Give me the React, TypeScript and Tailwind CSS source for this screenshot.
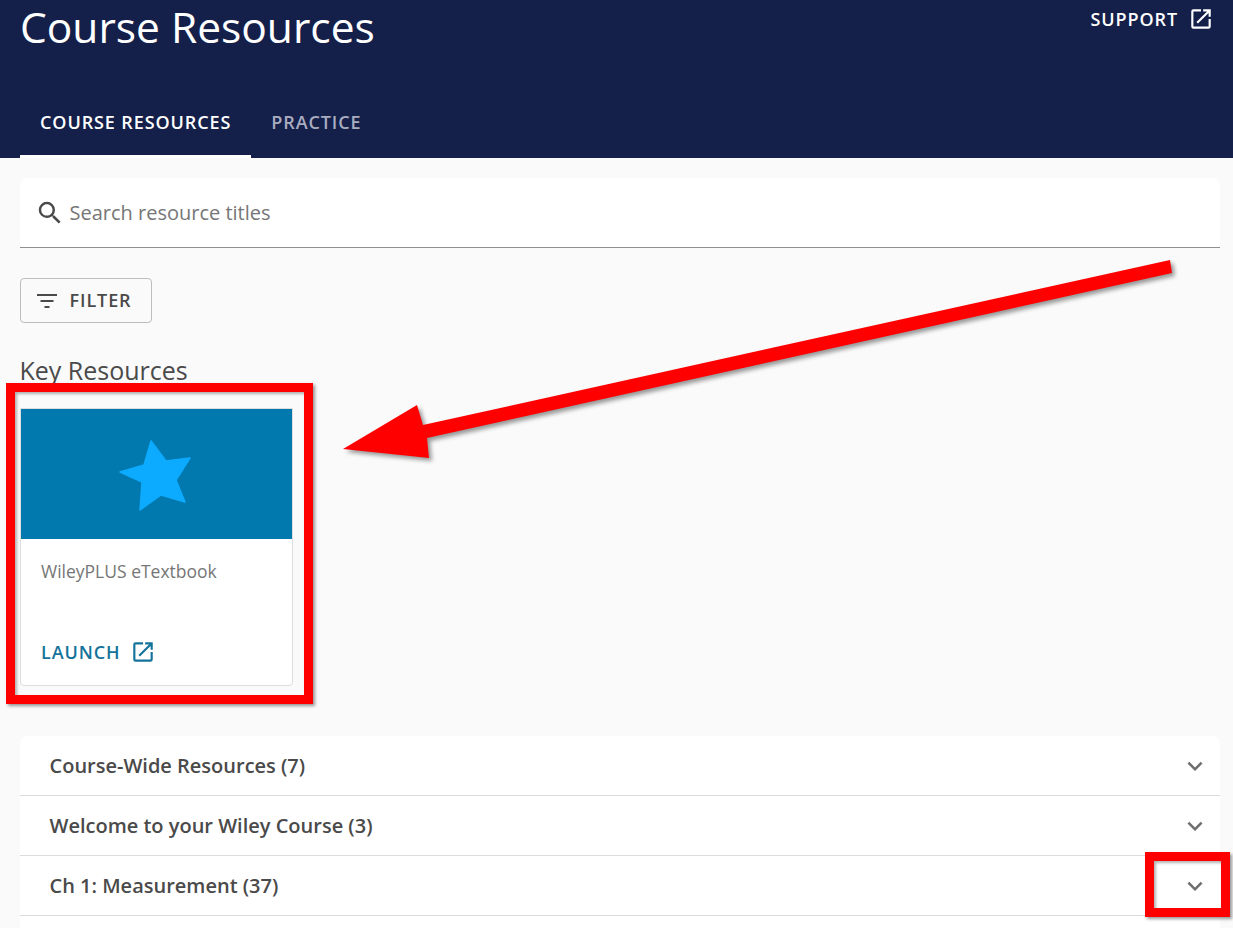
import React from "react";

const rows = [
  "Course-Wide Resources (7)",
  "Welcome to your Wiley Course (3)",
  "Ch 1: Measurement (37)",
];

const OpenIcon = () => (
  <svg viewBox="0 0 24 24" fill="currentColor" className="h-[26px] w-[26px]">
    <path d="M19 19H5V5h7V3H5a2 2 0 0 0-2 2v14a2 2 0 0 0 2 2h14c1.1 0 2-.9 2-2v-7h-2v7zM14 3v2h3.59l-9.83 9.83 1.41 1.41L19 6.41V10h2V3h-7z" />
  </svg>
);

const App: React.FC = () => {
  return (
    <div className="relative h-[928px] w-[1233px] overflow-hidden bg-[#fafafa] font-['Open_Sans',sans-serif]">
      <header className="flex h-[158px] flex-col justify-between bg-[#14204a] pr-[19px] pl-5 text-white">
        <div className="flex items-start justify-between">
          <h1 className="text-[42.5px] leading-[54px] font-normal">Course Resources</h1>
          <a className="mt-[6px] flex items-center gap-[10px] text-lg leading-6 font-semibold tracking-[0.9px]">
            SUPPORT
            <OpenIcon />
          </a>
        </div>
        <nav className="flex text-lg tracking-[0.9px]">
          <div className="flex h-[70px] items-center border-b-[3px] border-white px-5 pt-[1px] font-semibold">
            COURSE RESOURCES
          </div>
          <div className="flex h-[70px] items-center border-b-[3px] border-transparent px-5 pt-[1px] font-semibold text-[#a9adc0]">
            PRACTICE
          </div>
        </nav>
      </header>

      <main className="flex flex-col pt-5 pr-[13px] pl-5">
        <div className="flex h-[70px] items-center gap-[4.5px] rounded-t-lg border-b border-[#8f8f8f] bg-white px-[15px]">
          <svg viewBox="0 0 24 24" fill="#4a4a4a" className="h-[30px] w-[30px]">
            <path d="M15.5 14h-.79l-.28-.27A6.471 6.471 0 0 0 16 9.5 6.5 6.5 0 1 0 9.5 16c1.61 0 3.09-.59 4.23-1.57l.27.28v.79l5 4.99L20.49 19l-4.99-5zm-6 0C7.01 14 5 11.99 5 9.5S7.01 5 9.5 5 14 7.01 14 9.5 11.99 14 9.5 14z" />
          </svg>
          <span className="text-xl text-[#767676]">Search resource titles</span>
        </div>

        <button className="mt-[30px] flex h-[45px] w-[132px] items-center gap-[12.5px] rounded border border-[#bdbdbd] px-[16px] pb-[2px] text-lg font-semibold tracking-[0.9px] text-[#4a4a4a]">
          <svg viewBox="0 0 20 14" className="mt-[2px] h-[14px] w-5" fill="#4a4a4a">
            <path d="M0 0h20v2H0zM3.5 6h13v2h-13zM7.5 12h5v2h-5z" />
          </svg>
          FILTER
        </button>

        <h2 className="mt-[29px] -ml-[0.5px] text-[25px] leading-[36px] text-[#4a4a4a]">Key Resources</h2>

        <div className="mt-[20px] flex h-[278px] w-[273px] flex-col overflow-hidden rounded-b border border-[#dedede] bg-white">
          <div className="flex h-[130px] items-center justify-center bg-[#0279ae]">
            <svg viewBox="0 0 72 71" className="mt-[3px] mr-[3px] h-[71px] w-[72px]" fill="#0dabff">
              <path
                d="M32 1 47 21 71 18 57 40 66 62 42 55 21 70 23 42 1 32 25 25Z"
                stroke="#0dabff"
                strokeWidth="1.5"
                strokeLinejoin="round"
              />
            </svg>
          </div>
          <div className="flex flex-1 flex-col justify-between px-5 pt-[20px] pb-[20px]">
            <p className="text-[17.5px] leading-6 text-[#767676]">WileyPLUS eTextbook</p>
            <a className="flex items-center gap-[10px] text-lg leading-6 font-semibold tracking-[0.9px] text-[#14739b]">
              LAUNCH
              <OpenIcon />
            </a>
          </div>
        </div>

        <div className="mt-[50px] flex flex-col rounded-t-lg bg-white">
          {rows.map((row) => (
            <div
              key={row}
              className="flex h-[60px] items-center justify-between border-b border-[#dcdcdc] pr-[10px] pl-[29.5px]"
            >
              <span className="text-xl font-semibold text-[#4a4a4a]">{row}</span>
              <svg viewBox="0 0 24 24" fill="#6e6e6e" className="h-[30px] w-[30px]">
                <path d="M16.59 8.59 12 13.17 7.41 8.59 6 10l6 6 6-6z" />
              </svg>
            </div>
          ))}
          <div className="h-[60px]" />
        </div>
      </main>

      {/* red annotations drawn over the page */}
      <div className="absolute top-[383px] left-[6px] h-[321px] w-[307px] border-[9px] border-[#ff0000] shadow-[2px_2px_3px_rgba(0,0,0,0.4),inset_2px_2px_3px_rgba(0,0,0,0.3)]" />
      <div className="absolute top-[852px] left-[1145px] h-[65px] w-[85px] border-[9px] border-[#ff0000] shadow-[2px_2px_3px_rgba(0,0,0,0.4),inset_2px_2px_3px_rgba(0,0,0,0.3)]" />
      <svg
        viewBox="0 0 1233 928"
        className="pointer-events-none absolute top-0 left-0 h-[928px] w-[1233px] drop-shadow-[3px_3px_2px_rgba(0,0,0,0.4)]"
      >
        <path d="M1172 273 427 438 429 458 343 449 417 405 423 425 1170 260Z" fill="#ff0000" />
      </svg>
    </div>
  );
};

export default App;
